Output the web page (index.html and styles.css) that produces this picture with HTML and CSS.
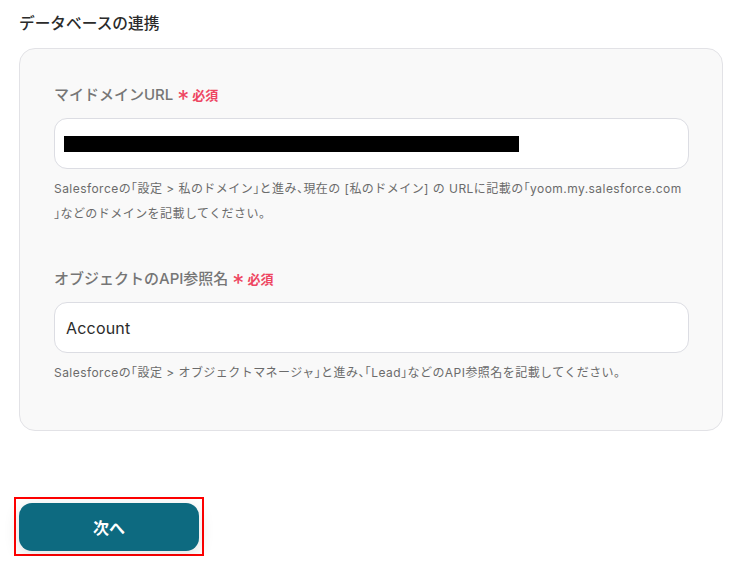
FILE: index.html
```html
<!DOCTYPE html>
<html lang="ja">
<head>
<meta charset="utf-8">
<link rel="stylesheet" href="styles.css">
</head>
<body>
<div class="page">
  <h2 class="section-title">データベースの連携</h2>
  <div class="card">
    <div class="field">
      <div class="label">マイドメインURL<span class="req"><span class="ast">*</span>必須</span></div>
      <div class="input"><span class="redact"></span></div>
      <p class="help">Salesforceの「設定 &gt; 私のドメイン」と進み、現在の [私のドメイン] の URLに記載の「yoom.my.salesforce.com<br>」などのドメインを記載してください。</p>
    </div>
    <div class="field second">
      <div class="label">オブジェクトのAPI参照名<span class="req"><span class="ast">*</span>必須</span></div>
      <div class="input"><span class="value">Account</span></div>
      <p class="help">Salesforceの「設定 &gt; オブジェクトマネージャ」と進み、「Lead」などのAPI参照名を記載してください。</p>
    </div>
  </div>
  <div class="actions">
    <div class="highlight">
      <button class="next">次へ</button>
    </div>
  </div>
</div>
</body>
</html>
```
FILE: styles.css
```css
* { box-sizing: border-box; }
body {
  margin: 0;
  background: #fff;
  font-family: Inter, "Noto Sans CJK JP", sans-serif;
}
.page {
  padding: 12px 28px 0 19px;
}
.section-title {
  margin: 0 0 12px;
  font-size: 15.7px;
  line-height: 24px;
  font-weight: 500;
  color: #2b2b2b;
}
.card {
  background: #f9f9f9;
  border: 1px solid #e2e2e6;
  border-radius: 16px;
  padding: 35px 33px 45px 34px;
}
.label {
  font-size: 15px;
  line-height: 22px;
  font-weight: 500;
  color: #767676;
  display: flex;
  align-items: center;
}
.req {
  color: #ee4661;
  font-size: 13px;
  font-weight: 600;
  margin-left: 4px;
  display: flex;
  align-items: center;
}
.ast {
  font-size: 24px;
  line-height: 22px;
  font-weight: 400;
  margin-right: 3px;
  position: relative;
  top: 5px;
}
.input {
  margin-top: 12px;
  height: 51px;
  background: #fff;
  border: 1px solid #dcdde3;
  border-radius: 13px;
  display: flex;
  align-items: center;
  padding: 0 11px;
}
.redact {
  display: block;
  width: 455px;
  height: 16px;
  background: #000;
  margin-left: -2px;
}
.value {
  font-size: 16px;
  color: #2b2b2b;
  letter-spacing: 0.2px;
}
.help {
  margin: 7px 0 0;
  font-size: 12px;
  line-height: 25px;
  color: #6b6b6b;
  letter-spacing: 0.45px;
  font-feature-settings: "halt";
}
.second {
  margin-top: 42px;
}
.actions {
  margin-top: 66px;
  display: flex;
}
.highlight {
  margin-left: -5px;
  border: 2px solid #f00;
  padding: 4px 3px 3px 3px;
  display: flex;
}
.next {
  width: 180px;
  height: 48px;
  border: none;
  border-radius: 13px;
  background: #0d6a80;
  color: #fff;
  font-family: Inter, "Noto Sans CJK JP", sans-serif;
  font-size: 16px;
  font-weight: 700;
  box-shadow: 0 4px 16px rgba(0, 0, 0, 0.12);
}
```
